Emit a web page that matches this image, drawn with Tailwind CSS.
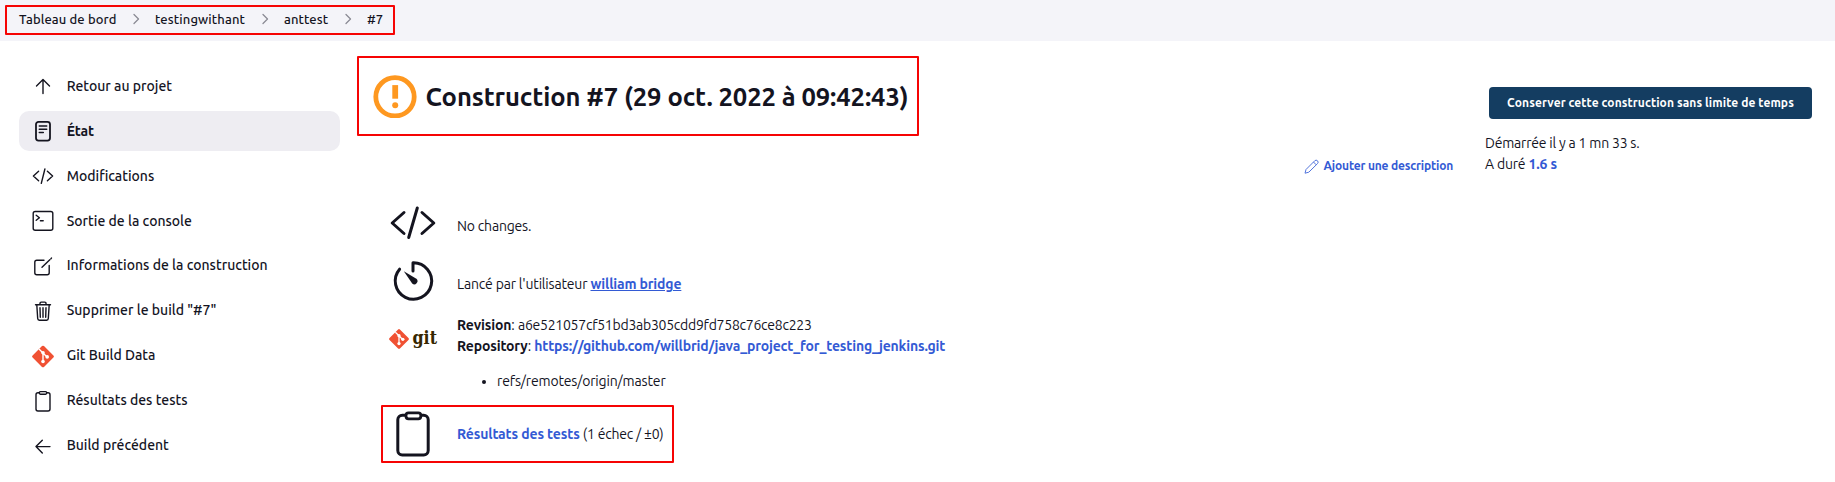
<!DOCTYPE html>
<html lang="fr">
<head>
<meta charset="utf-8">
<title>anttest #7</title>
<script src="https://cdn.jsdelivr.net/npm/@tailwindcss/browser@4"></script>
</head>
<body class="h-[482px] overflow-hidden bg-white font-['Ubuntu','Noto_Sans',sans-serif] text-[14px] text-[#14141f]">
<svg class="hidden">
  <symbol id="chev" viewBox="0 0 8 12"><path d="M2 1.5 6.5 6 2 10.5" fill="none" stroke="#8b8b95" stroke-width="1.3" stroke-linecap="round" stroke-linejoin="round"/></symbol>
  <symbol id="gitmark" viewBox="0 0 22 22">
    <path d="M10 .6a1.4 1.4 0 0 1 2 0l9.4 9.4a1.4 1.4 0 0 1 0 2L12 21.4a1.4 1.4 0 0 1-2 0L.6 12a1.4 1.4 0 0 1 0-2z" fill="#f05133"/>
    <path d="M7 3.6 11 7.5V16M11 7.5 15 11.5" fill="none" stroke="#fff" stroke-width="1.4"/>
    <circle cx="11" cy="7.3" r="1.8" fill="#fff"/><circle cx="11" cy="16" r="1.8" fill="#fff"/><circle cx="15.2" cy="11.4" r="1.8" fill="#fff"/>
  </symbol>
</svg>

<header class="flex h-[41px] items-start bg-[#f4f4f9] pt-[5px] pl-[5px]">
  <nav class="flex h-[30px] w-[390px] items-center rounded-[1px] border-2 border-[#f60404] pl-3 text-[13px] font-medium whitespace-nowrap">
    <span class="w-[113px] tracking-[0.11px]">Tableau de bord</span>
    <svg class="mb-0.5 h-3 w-2"><use href="#chev"/></svg>
    <span class="ml-[15px] w-[106px] tracking-[0.14px]">testingwithant</span>
    <svg class="mb-0.5 h-3 w-2"><use href="#chev"/></svg>
    <span class="ml-[15px] w-[60px] tracking-[0.1px]">anttest</span>
    <svg class="mb-0.5 h-3 w-2"><use href="#chev"/></svg>
    <span class="ml-[15px] font-medium">#7</span>
  </nav>
</header>

<div class="flex h-[441px]">
  <aside class="w-[357px] shrink-0 pt-[25.22px] pl-[19px]">
    <ul class="flex w-[321px] flex-col gap-[4.9375px] font-medium whitespace-nowrap [&>li]:flex [&>li]:h-10 [&>li]:items-center [&>li]:gap-[12px] [&>li]:rounded-[10px] [&>li]:pl-[11.7px] [&_svg]:size-6 [&_svg]:fill-none [&_svg]:stroke-[#14141f] [&_svg]:stroke-[1.4]">
      <li><svg viewBox="0 0 24 24" stroke-linecap="round" stroke-linejoin="round"><path d="M5.5 12 12 5.5l6.5 6.5M12 5.8V19.5"/></svg><span>Retour au projet</span></li>
      <li class="bg-[#eeedf2]"><svg viewBox="0 0 24 24" stroke-linecap="round"><rect x="5" y="2.8" width="14" height="18.8" rx="2.5" stroke-width="1.8"/><path d="M8.3 7h7.4M8.3 10.2h7.4M8.3 13.4h4" stroke-width="1.5"/></svg><span class="font-bold tracking-[-0.15px]">État</span></li>
      <li><svg viewBox="0 0 24 24" stroke-linecap="round" stroke-linejoin="round"><path d="M7.6 7.2 2.4 12l5.2 4.8M16.4 7.2l5.2 4.8-5.2 4.8M13.9 5 10.3 19.4"/></svg><span>Modifications</span></li>
      <li><svg viewBox="0 0 24 24" stroke-linecap="round" stroke-linejoin="round"><rect x="2.2" y="2.5" width="19.6" height="18.8" rx="2"/><path d="m5.2 6.2 3.2 2.5-3.2 2.6M9.4 11.7h2.8"/></svg><span>Sortie de la console</span></li>
      <li><svg viewBox="0 0 24 24" stroke-linecap="round" stroke-linejoin="round"><path d="M13 6.3H5.8a2 2 0 0 0-2 2v10.4a2 2 0 0 0 2 2h10.4a2 2 0 0 0 2-2V11.5M11 13.3l7.8-7.5M19.9 4.7l.6-.6"/></svg><span>Informations de la construction</span></li>
      <li><svg viewBox="0 0 24 24" stroke-linecap="round" stroke-linejoin="round"><path d="m5.8 5.8.9 13.7a1.8 1.8 0 0 0 1.7 1.7h7.2a1.8 1.8 0 0 0 1.7-1.7l.9-13.7M4.5 5.8h15M9 5.6V4.3a1.2 1.2 0 0 1 1.2-1.2h3.6A1.2 1.2 0 0 1 15 4.3v1.3M12 8.7v9.6M9 8.7l.3 9.6M15 8.7l-.3 9.6"/></svg><span>Supprimer le build "#7"</span></li>
      <li><svg viewBox="0 0 24 24"><use href="#gitmark" x="1" y="1.5" width="22" height="22" class="stroke-none"/></svg><span>Git Build Data</span></li>
      <li><svg viewBox="0 0 24 24" stroke-linecap="round" stroke-linejoin="round"><rect x="5" y="3.7" width="14" height="18.3" rx="2"/><rect x="8.3" y="2.6" width="7.4" height="2.6" rx="1.1" fill="#fff"/></svg><span>Résultats des tests</span></li>
      <li><svg viewBox="0 0 24 24" stroke-linecap="round" stroke-linejoin="round"><path d="M11.3 6.2 5 12.6l6.3 6.4M5.3 12.6H19"/></svg><span>Build précédent</span></li>
    </ul>
  </aside>

  <main class="flex-1 pt-[15px]">
    <div class="flex h-[138px]">
      <h1 class="flex h-20 w-[562px] shrink-0 items-center rounded-[1px] border-2 border-[#f60404] pl-[14px] text-[25.6px] font-bold tracking-[-0.12px] whitespace-nowrap">
        <svg class="h-11 w-11 shrink-0" viewBox="0 0 44 44"><circle cx="22" cy="22.8" r="19.2" fill="none" stroke="#fe9820" stroke-width="4.8"/><path d="M19.3 11.1h5.8v13.6h-5.8z" fill="#fe9820"/><circle cx="22.2" cy="31.3" r="3" fill="#fe9820"/></svg>
        <span class="mt-0.5 ml-[8.6px]">Construction #7 (29 oct. 2022 à 09:42:43)</span>
      </h1>
      <div class="ml-auto flex items-start whitespace-nowrap">
        <a class="mt-[100px] mr-8 flex h-5 w-[149px] items-center gap-[4.6px] text-[12px] font-bold tracking-[-0.17px] text-[#335ad4]">
          <svg class="size-[15px] shrink-0" viewBox="0 0 15 15" fill="none" stroke="#5375dc" stroke-width="1" stroke-linejoin="round"><path d="M1 14.2 2 10.5 10.7 1.8a1.9 1.9 0 0 1 2.8 2.8L4.8 13.2zM9.5 3l2.7 2.8"/></svg>
          Ajouter une description
        </a>
        <div class="w-[350px] pt-[31px]">
          <button class="ml-1 flex h-8 w-[323px] items-center justify-center rounded-[4px] bg-[#143d61] text-[12px] font-bold tracking-[0.09px] text-white">Conserver cette construction sans limite de temps</button>
          <div class="mt-[14px] leading-[21px]">
            <p class="tracking-[-0.2px]">Démarrée il y a 1 mn 33 s.</p>
            <p><span class="tracking-[-0.2px]">A duré</span> <a class="font-bold tracking-[-0.15px] text-[#335ad4]">1.6 s</a></p>
          </div>
        </div>
      </div>
    </div>

    <div class="pl-6 whitespace-nowrap">
      <div class="flex h-[60px]">
        <svg class="h-[60px] w-[76px] shrink-0" viewBox="381 194 76 60" fill="none" stroke="#14141f" stroke-width="3" stroke-linecap="round" stroke-linejoin="round"><path d="M404 212.5 392.2 223 404 233.5M422 212.5 433.8 223 422 233.5M417.3 208 408.7 237.5"/></svg>
        <p class="mt-[22px] h-5 leading-5 tracking-[-0.2px]">No changes.</p>
      </div>
      <div class="flex h-[58px]">
        <svg class="h-[58px] w-[76px] shrink-0" viewBox="381 254 76 58" fill="none" stroke="#14141f" stroke-width="3" stroke-linecap="round" stroke-linejoin="round"><path d="M413 271V262.8A18.2 18.2 0 1 1 399.6 269.2"/><path d="M403.8 271.3 416.4 278.8a3.1 3.1 0 0 1-4.2 4.6z" fill="#14141f" stroke="none"/></svg>
        <p class="mt-[20px] h-5 leading-5"><span class="tracking-[-0.18px]">Lancé par l'utilisateur</span> <a class="font-bold tracking-[-0.15px] text-[#335ad4] underline">william bridge</a></p>
      </div>
      <div class="flex h-[93px]">
        <svg class="h-[93px] w-[76px] shrink-0" viewBox="381 312 76 93"><use href="#gitmark" x="389" y="329" width="20" height="20"/><text x="412.5" y="344" textLength="24.5" lengthAdjust="spacingAndGlyphs" font-family="DejaVu Serif" font-weight="bold" font-size="18" fill="#362701">git</text></svg>
        <div class="pt-[3px] leading-[21px]">
          <p><b class="font-bold tracking-[-0.15px]">Revision</b>: <span class="tracking-[-0.25px]">a6e521057cf51bd3ab305cdd9fd758c76ce8c223</span></p>
          <p><b class="font-bold tracking-[-0.15px]">Repository</b>: <a class="font-bold tracking-[-0.15px] text-[#335ad4]">https://github.com/willbrid/java_project_for_testing_jenkins.git</a></p>
          <ul class="mt-[14px] pl-10"><li class="relative tracking-[-0.15px] before:absolute before:top-[9px] before:-left-[15px] before:size-1 before:rounded-full before:bg-[#14141f]">refs/remotes/origin/master</li></ul>
        </div>
      </div>
      <div class="flex h-[58px] w-[293px] rounded-[1px] border-2 border-[#f60404]">
        <svg class="h-[54px] w-[74px] shrink-0" viewBox="383 407 74 54" fill="none" stroke="#14141f" stroke-width="3" stroke-linejoin="round"><rect x="397.8" y="415.3" width="30.4" height="39.7" rx="4.5"/><rect x="406" y="412.8" width="14.8" height="6" rx="2.5" fill="#fff" stroke-width="2.8"/></svg>
        <p class="mt-[17px] h-5 leading-5"><a class="font-bold tracking-[-0.12px] text-[#335ad4]">Résultats des tests</a> <span class="tracking-[-0.22px]">(1 échec / ±0)</span></p>
      </div>
    </div>
  </main>
</div>
</body>
</html>
